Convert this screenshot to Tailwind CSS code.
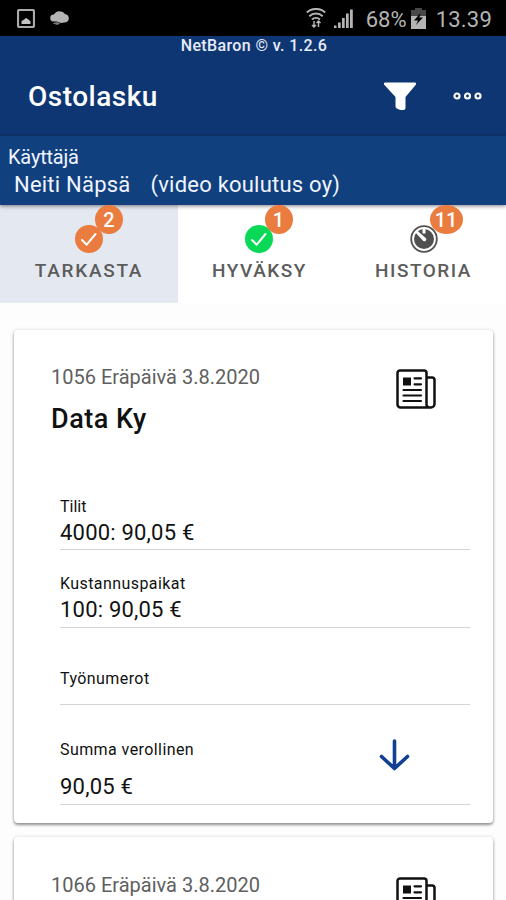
<!DOCTYPE html>
<html lang="fi">
<head>
    <meta charset="UTF-8">
    <meta name="viewport" content="width=device-width, initial-scale=1.0">
    <title>NetBaron - Ostolasku</title>
    <script src="https://cdn.jsdelivr.net/npm/@tailwindcss/browser@4"></script>
</head>
<body class="bg-[#fdfdfd] font-['Roboto',sans-serif] text-[#111]">
    <!-- Icons used more than once -->
    <svg class="hidden">
        <symbol id="newspaper" viewBox="0 0 40 40">
            <path d="M29 38.500H4.500a3 3 0 0 1-3-3V4a2.500 2.500 0 0 1 2.500-2.500h24A2.500 2.500 0 0 1 30.500 4v31.500a3 3 0 0 0 3 3h1.500a3.500 3.500 0 0 0 3.500-3.500V11a2.500 2.500 0 0 0-2.500-2.500h-5.500M29 38.500h5" fill="none" stroke="#111" stroke-width="2.500"/>
            <path d="M7 8.500h8v8H7z" fill="#111"/>
            <path d="M18.500 9.300h6.500M18.500 15.300h6.500M7.500 21h17.500M7.500 26.500h17.500M7.500 32h17.500" stroke="#111" stroke-width="2.200" stroke-linecap="round"/>
        </symbol>
        <symbol id="check" viewBox="0 0 28 28">
            <circle cx="14" cy="14" r="14"/>
            <path d="M7 15l4.700 4.700L20.500 9" fill="none" stroke="#fff" stroke-width="2" stroke-linecap="round" stroke-linejoin="round"/>
        </symbol>
    </svg>

    <div class="w-[506px] h-[900px] overflow-hidden flex flex-col">
        <!-- Status bar -->
        <div class="h-[36px] shrink-0 bg-black text-[#b4b4b4] flex items-center justify-between pl-[17px] pr-[14px]">
            <div class="flex items-center gap-[15px]">
                <svg class="w-[18px] h-[19px]" viewBox="0 0 18 19"><rect x="1" y="1" width="16" height="17" rx="1.500" fill="none" stroke="#aaa" stroke-width="2.200"/><path d="M4.500 15v-3l2-1 2.500-2 2.500 1.500 2 2V15z" fill="#c4c4c4"/></svg>
                <svg class="w-[20px] h-[16px]" viewBox="0 0 20 16"><path d="M3.500 11.500A3.500 3.500 0 0 1 4 4.500 6 5 0 0 1 15 4a4.300 4.300 0 0 1 1 8.300l-5 .7-4-1.500z" fill="#b4b4b4"/><path d="M2.500 13.500l4-1.500 4 1-3 2z" fill="#777"/></svg>
            </div>
            <div class="flex items-center">
                <svg class="w-[20px] h-[20px]" viewBox="0 0 20 20" fill="none" stroke="#b4b4b4" stroke-width="2"><path d="M.8 4.500C6-.200 14-.200 19.200 4.500M3.300 8.200a10 10 0 0 1 13.400 0M6 11.500a6 6 0 0 1 8 0"/><path d="M8 13v6M6 17l2 2 2-2M12.500 19v-6M10.500 15l2-2 2 2" stroke-width="1.500"/></svg>
                <svg class="w-[19px] h-[19px] ml-[8px]" viewBox="0 0 19 19" fill="#b4b4b4"><path d="M0 16.500h2.500V19H0zM4 13.500h2.700V19H4zM8 9h2.700v10H8zM12 4.500h2.700V19H12zM16 .500h2.800V19H16z"/></svg>
                <span class="ml-[13px] mt-[4px] w-[43px] text-[22px] leading-none">68%</span>
                <svg class="w-[15px] h-[21px] ml-[2px]" viewBox="0 0 15 21"><path d="M4 0h7v2h4v7H0V2h4z" fill="#484848"/><path d="M0 8h15v13H0z" fill="#b4b4b4"/><path d="M9.500 5L3 12.500h4L5 17l7-7.500H8.500z" fill="#000"/></svg>
                <span class="ml-[10px] mt-[4px] text-[22px] leading-none tracking-[0.2px]">13.39</span>
            </div>
        </div>

        <!-- Header -->
        <header class="h-[100px] shrink-0 bg-[#0e3672] text-white flex flex-col">
            <div class="h-[20px] text-center text-[16px] leading-[20px] font-medium tracking-[0.38px] text-[#e8ecf8] pl-[2px]">NetBaron © v. 1.2.6</div>
            <div class="h-[80px] flex items-center justify-between pl-[28px] pr-[24px]">
                <h1 class="mt-[2px] text-[28px] leading-none font-medium tracking-[0.5px]">Ostolasku</h1>
                <div class="flex items-center">
                    <svg class="w-[34px] h-[30px]" viewBox="0 0 34 30"><path d="M2 1.500h30q1.500 0 1 2L22.500 16v11q0 2-2 2h-3q-5-1.500-5-3.500V16L1 3.500q-.5-2 1-2z" fill="#fff"/></svg>
                    <svg class="w-[30px] h-[10px] ml-[35px]" viewBox="0 0 30 10" fill="none" stroke="#fff" stroke-width="2.200"><circle cx="5" cy="5" r="2.500"/><circle cx="15.500" cy="5" r="2.500"/><circle cx="26" cy="5" r="2.500"/></svg>
                </div>
            </div>
        </header>
        <div class="relative h-[69px] shrink-0 bg-[#10407e] text-[#f0f4ff] pl-[8px] pt-[9px] border-b border-[#1a3c80] shadow-[0_1px_4px_rgba(0,0,0,0.5)]">
            <div class="text-[20px] leading-[24px] tracking-[-0.2px]">Käyttäjä</div>
            <div class="flex gap-[20px] pl-[6px] mt-[4px] text-[22px] leading-[24px] tracking-[0.22px]"><span>Neiti Näpsä</span><span>(video koulutus oy)</span></div>
        </div>

        <!-- Tabs -->
        <nav class="h-[98px] shrink-0 flex text-[19px] leading-none tracking-[1.700px] font-medium text-[#5c5c5c] bg-white">
            <div class="w-[178px] bg-[#e4e9f1] flex flex-col items-center pt-[20px]">
                <div class="relative">
                    <svg class="w-[28px] h-[28px] fill-[#e97c3e]"><use href="#check"/></svg>
                    <span class="absolute left-[20px] top-[-20px] w-[28px] h-[29px] rounded-[50%] bg-[#e97c3e] text-white text-[20px] leading-[30px] tracking-normal text-center">2</span>
                </div>
                <span class="mt-[8px]">TARKASTA</span>
            </div>
            <div class="w-[163px] flex flex-col items-center pt-[20px]">
                <div class="relative left-[-1px]">
                    <svg class="w-[28px] h-[28px] fill-[#0ad957]"><use href="#check"/></svg>
                    <span class="absolute left-[20px] top-[-20px] w-[28px] h-[29px] rounded-[50%] bg-[#e97c3e] text-white text-[20px] leading-[30px] tracking-normal text-center">1</span>
                </div>
                <span class="mt-[8px] tracking-[1.500px]">HYVÄKSY</span>
            </div>
            <div class="w-[165px] flex flex-col items-center pt-[20px]">
                <div class="relative">
                    <svg class="w-[28px] h-[28px]" viewBox="0 0 28 28"><circle cx="14" cy="14" r="12.800" fill="#fff" stroke="#505050" stroke-width="1.800"/><circle cx="14" cy="14" r="10" fill="#505050"/><path d="M12.500 3.500h3v5h-3z" fill="#fff"/><path d="M6.500 5l9.500 8.200a2 2 0 0 1-2.700 2.800L5 7z" fill="#fff"/></svg>
                    <span class="absolute left-[20px] top-[-20px] w-[33px] h-[29px] rounded-[50%] bg-[#e97c3e] text-white text-[20px] leading-[30px] tracking-normal text-center">11</span>
                </div>
                <span class="mt-[8px] tracking-[1.500px]">HISTORIA</span>
            </div>
        </nav>

        <!-- Invoices -->
        <main class="flex flex-col gap-[14px] pt-[27px] px-[14px] w-[507px]">
            <article class="h-[493px] shrink-0 rounded-[4px] bg-white shadow-[0_2px_3px_rgba(0,0,0,0.4),0_0_4px_rgba(0,0,0,0.12)]">
                <div class="h-[163px] flex justify-between pl-[37px] pr-[57px]">
                    <div class="pt-[35px]">
                        <p class="text-[20px] leading-[24px] text-[#606060]">1056 Eräpäivä 3.8.2020</p>
                        <h2 class="mt-[14px] text-[27px] leading-[32px] font-medium tracking-[0.5px]">Data Ky</h2>
                    </div>
                    <svg class="w-[40px] h-[40px] mt-[39px]"><use href="#newspaper"/></svg>
                </div>
                <div class="flex flex-col pl-[46px] pr-[23px]">
                    <div class="h-[57px] border-b border-[#d4d4d4] pt-[4px]">
                        <p class="text-[16px] leading-[20px]">Tilit</p>
                        <p class="mt-[3px] text-[22px] leading-[26px] tracking-[0.2px]">4000: 90,05 €</p>
                    </div>
                    <div class="h-[78px] border-b border-[#d4d4d4] pt-[24px]">
                        <p class="text-[16px] leading-[20px] tracking-[0.42px]">Kustannuspaikat</p>
                        <p class="mt-[3px] text-[22px] leading-[26px] tracking-[0.2px]">100: 90,05 €</p>
                    </div>
                    <div class="h-[77px] border-b border-[#d4d4d4] pt-[41px]">
                        <p class="text-[16px] leading-[20px] tracking-[0.42px]">Työnumerot</p>
                    </div>
                    <div class="h-[100px] border-b border-[#d4d4d4] pt-[35px] pr-[60px] flex justify-between">
                        <div>
                            <p class="text-[16px] leading-[20px] tracking-[0.42px]">Summa verollinen</p>
                            <p class="mt-[14px] text-[22px] leading-[26px] tracking-[0.2px]">90,05 €</p>
                        </div>
                        <svg class="w-[31px] h-[32px] mt-[-1px]" viewBox="0 0 31 32" fill="none" stroke="#103f94" stroke-width="3.600" stroke-linecap="round" stroke-linejoin="round"><path d="M15.500 2v27M2.500 17.500l13 12 13-12"/></svg>
                    </div>
                </div>
            </article>
            <article class="h-[493px] shrink-0 rounded-[4px] bg-white shadow-[0_2px_3px_rgba(0,0,0,0.4),0_0_4px_rgba(0,0,0,0.12)]">
                <div class="flex justify-between pl-[37px] pr-[57px]">
                    <p class="pt-[36px] text-[20px] leading-[24px] text-[#606060]">1066 Eräpäivä 3.8.2020</p>
                    <svg class="w-[40px] h-[40px] mt-[40px]"><use href="#newspaper"/></svg>
                </div>
            </article>
        </main>
    </div>
</body>
</html>
